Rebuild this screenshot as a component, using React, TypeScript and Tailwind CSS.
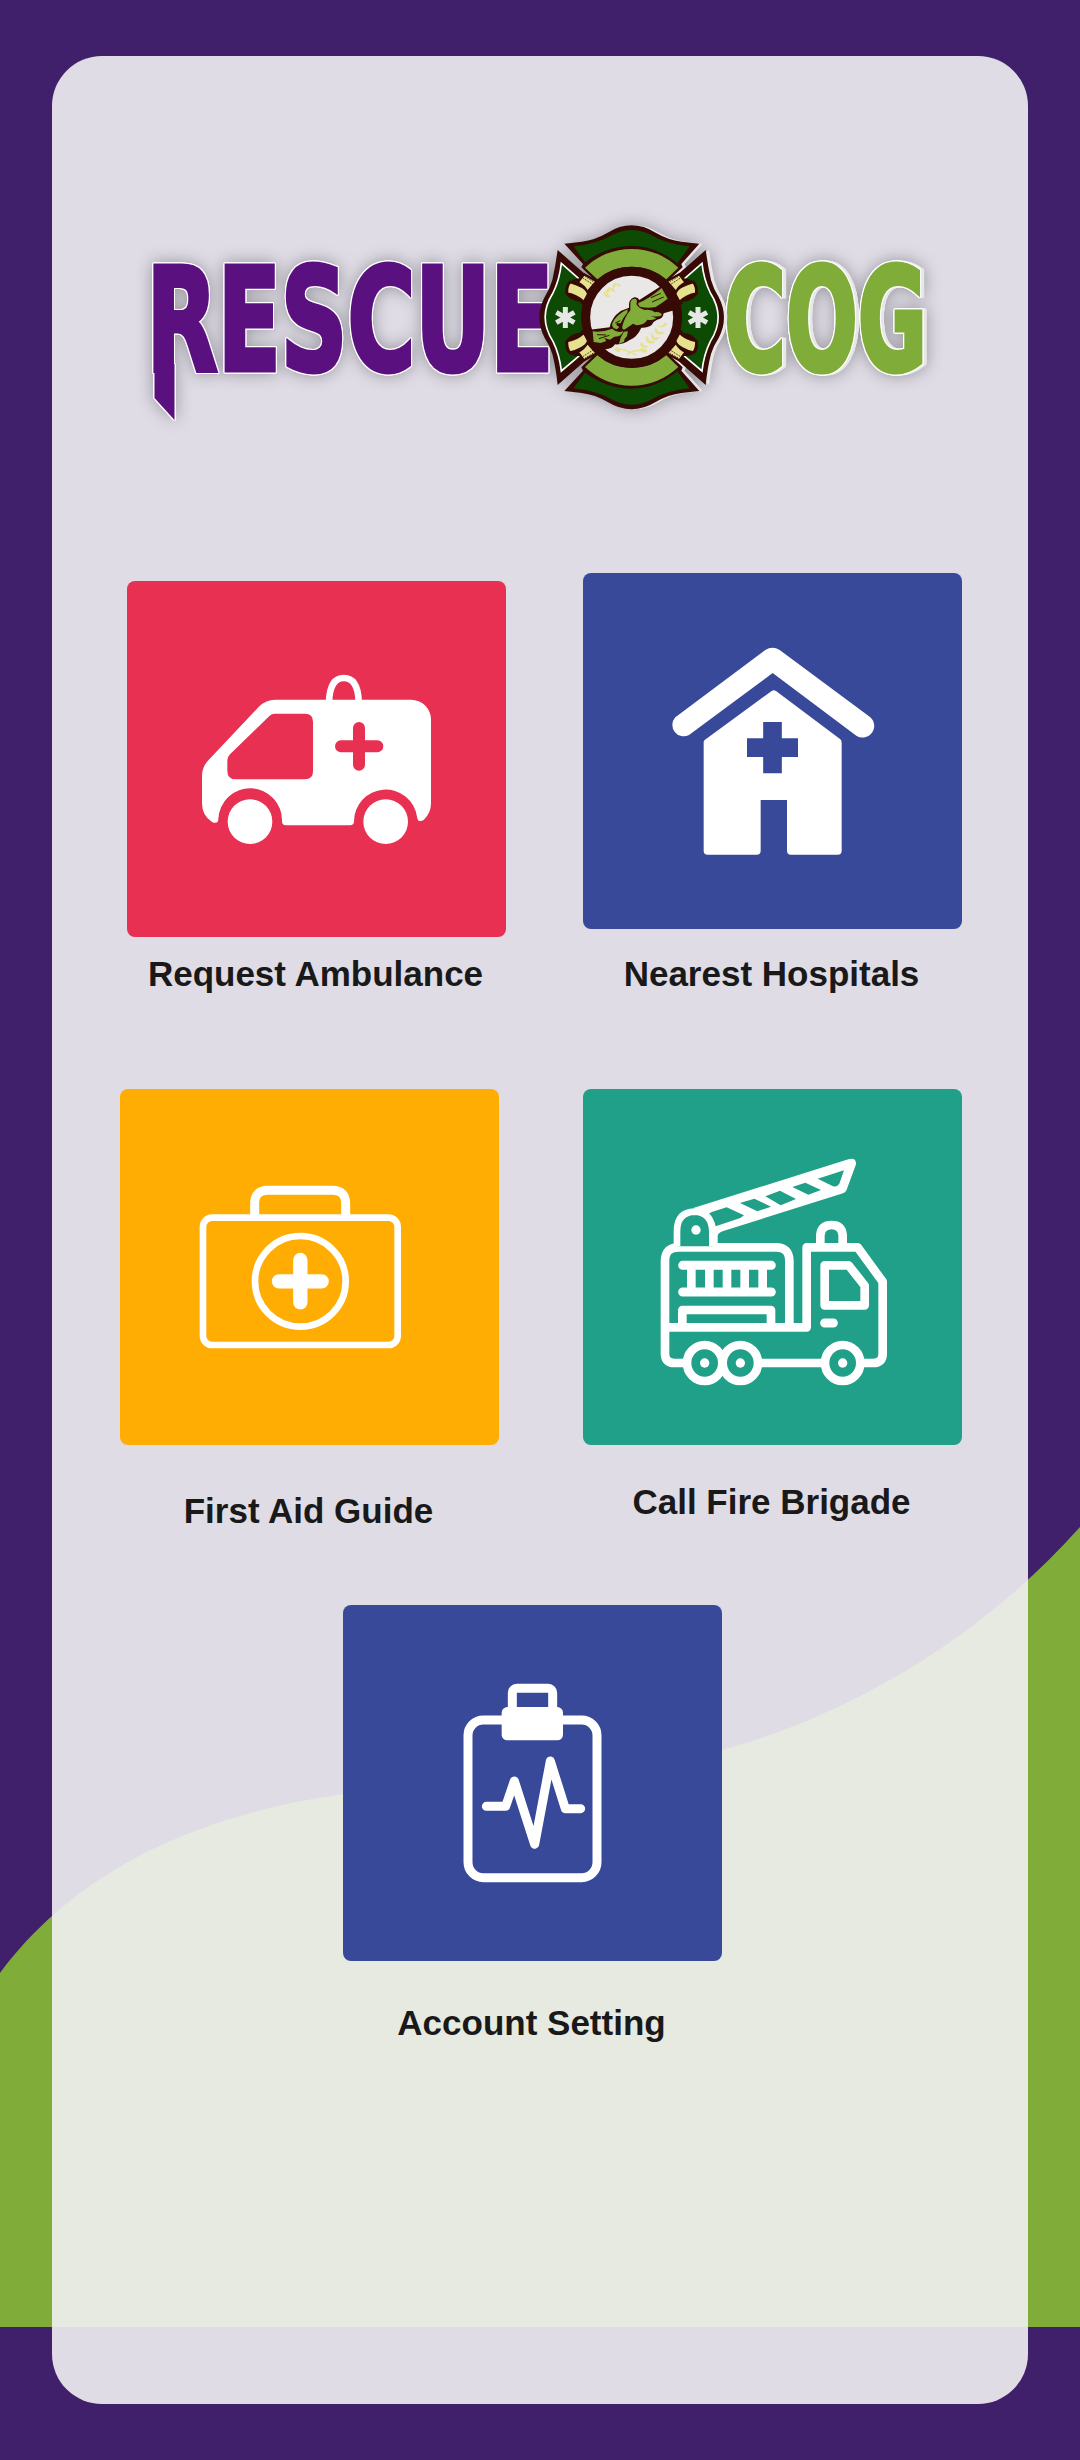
import type { ReactNode } from "react";

function Backdrop() {
  return (
    <svg className="absolute inset-0 h-full w-full" viewBox="0 0 1080 2460" aria-hidden="true">
      <path
        fill="#80ad3a"
        d="M0 1973C88 1855 225 1811 343 1794C470 1777 600 1783 722 1750C840 1718 975 1645 1080 1527V2327H0Z"
      />
    </svg>
  );
}

const topShield =
  "M133 131L185 125Q225 120 263 98Q335 54 407 98Q445 120 485 125L538 131L484 192L488 202L438 248H232L184 202L189 192Z";
const wing = "M113 150L215 240V465L113 555Q107 500 97 462Q89 436 74 414Q42 352 74 291Q89 268 97 240Q106 200 113 150Z";

function ShieldTop() {
  return (
    <g>
      <path fill="#380a06" d={topShield} />
      <path fill="#0d4a03" d="M161 139Q231 132 278 104Q335 76 392 104Q439 132 509 139L472 190Q408 138 335 138Q262 138 195 186Z" />
      <path fill="#80ad3a" d="M195 203Q255 147 335 147Q415 147 475 203L439 238Q395 200 335 200Q275 200 232 238Z" />
    </g>
  );
}

function Strap() {
  return (
    <g stroke="#380a06">
      <path strokeWidth="8" fill="#e6e18f" d="M150 246Q190 256 210 280L191 306Q171 287 141 281Q139 260 150 246Z" />
      <path strokeWidth="7" fill="#e6e18f" d="M192 223L230 244L202 276Q193 258 173 248Z" />
      <path strokeWidth="3" strokeDasharray="3 3" d="M196 230L222 246M190 235L218 253" />
    </g>
  );
}

function Wing() {
  return (
    <g>
      <path fill="#380a06" d={wing} />
      <path
        fill="#0d4a03"
        stroke="#fff"
        strokeWidth="5"
        d="M124 190L190 248V457L124 513Q119 465 99 424Q52 352 99 279Q119 238 124 190Z"
      />
      <path fill="#380a06" d="M180 235L215 262V443L180 468Q130 470 137 425Q150 400 182 398V306Q150 302 137 281Q130 240 180 235Z" />
      <path fill="#0d4a03" d="M120 285Q150 295 190 316V389Q150 405 120 415Z" />
      <Strap />
      <g transform="matrix(1 0 0 -1 0 704)">
        <Strap />
      </g>
      <path stroke="#e8e7e8" strokeWidth="15" d="M136 321V384M109 337L163 368M109 368L163 337" />
    </g>
  );
}

function Handshake() {
  return (
    <g transform="translate(165 186)">
      <g fill="#e6e18f">
        <path d="M84 89Q88 108 105 106Q104 94 84 89ZM91 88Q96 80 104 74Q108 88 94 98ZM104 76Q107 91 121 89Q119 79 104 76ZM112 71Q116 63 123 60Q124 74 115 80ZM122 64Q126 76 138 72Q136 63 122 64Z" />
        <path d="M249 188Q250 204 275 190Q278 181 268 183L258 194ZM241 195Q234 216 252 218Q268 216 268 209L251 209ZM229 209Q224 226 235 235Q250 236 254 225L238 226ZM214 221Q208 239 223 244Q238 249 240 238L225 236ZM198 239Q190 253 207 258Q218 262 218 252L207 250ZM195 257Q198 273 211 272Q221 270 215 263Z" />
        <path d="M118 262Q126 247 139 264Q128 278 118 262Z" />
      </g>
      <path fill="none" stroke="#e6e18f" strokeWidth="5" d="M137 261Q165 268 184 280M155 278Q174 263 199 266" />
      <path
        fill="#380a06"
        d="M44 203L104 196Q109 167 137 147L162 137Q160 111 178 106Q189 105 193 114L262 70L300 144L266 154Q264 171 246 173L236 180Q227 199 199 197Q186 226 163 235Q144 249 120 247Q111 264 83 261L66 242Z"
      />
      <g fill="#80ad3a">
        <path d="M190 123Q222 111 260 78L278 110Q258 125 242 135Q217 140 195 134Q188 130 190 123Z" />
        <path d="M166 124Q169 108 183 111Q188 116 184 126Q191 139 210 144Q229 141 240 151Q255 148 261 159Q250 167 226 161L244 169Q234 177 217 173Q209 188 185 190L174 185L150 202Q140 205 142 193Q149 165 166 145Z" />
        <path d="M53 208Q80 212 112 200Q126 215 145 207Q140 225 118 224L105 233L88 228L94 237L77 243L56 240Z" />
        <path d="M112 184Q123 158 158 142L157 152Q143 168 137 184L126 183Q120 190 133 194L126 202Q109 199 112 184Z" />
        <path d="M146 210L158 207Q159 223 149 230L147 239L132 246L137 227Z" />
      </g>
      <path fill="none" stroke="#380a06" strokeWidth="3" d="M228 107L257 94M231 120L266 105M66 218L93 219M72 230L103 220M121 183L136 176" />
    </g>
  );
}

function Emblem() {
  return (
    <g transform="translate(520 200) scale(.33333)">
      <g fill="#e8e7e8" transform="translate(10 0)">
        <path d={topShield} />
        <path transform="matrix(1 0 0 -1 0 704)" d={topShield} />
        <path transform="matrix(-1 0 0 1 670 0)" d={wing} />
      </g>
      <ShieldTop />
      <g transform="matrix(1 0 0 -1 0 704)">
        <ShieldTop />
      </g>
      <Wing />
      <g transform="matrix(-1 0 0 1 670 0)">
        <Wing />
      </g>
      <circle cx="335" cy="352" r="138" fill="#e9e8e7" stroke="#380a06" strokeWidth="27" />
      <Handshake />
    </g>
  );
}

function Word({ children, x, length, color }: { children: string; x: number; length: number; color: string }) {
  return (
    <text
      x={x / 0.62}
      y={370.5}
      textLength={length / 0.62}
      lengthAdjust="spacingAndGlyphs"
      transform="scale(.62 1)"
      fontSize={143}
      fontWeight={700}
      fontFamily='"DejaVu Sans", sans-serif'
      fill={color}
      stroke={color}
      strokeWidth={5}
      strokeLinejoin="miter"
    >
      {children}
    </text>
  );
}

function Logo() {
  return (
    <svg
      className="ml-[78px] block h-[240px] w-[820px] overflow-visible drop-shadow-[0_0_8px_rgba(0,0,0,0.32)]"
      viewBox="130 200 820 240"
    >
      <g className="[filter:drop-shadow(1px_0_0_#fff)_drop-shadow(-1px_0_0_#fff)_drop-shadow(0_1px_0_#fff)_drop-shadow(0_-1px_0_#fff)]">
        <path fill="#5a107f" d="M154.500 364H174.500V420L154.500 398Z" />
        <Word x={146.5} length={407} color="#5a107f">RESCUE</Word>
      </g>
      <g className="[filter:drop-shadow(1px_0_0_#fff)_drop-shadow(-1px_0_0_#fff)_drop-shadow(0_1px_0_#fff)_drop-shadow(0_-1px_0_#fff)_drop-shadow(3px_0_0_#e8e7e8)]">
        <Word x={724} length={203} color="#80ad3a">COG</Word>
      </g>
      <Emblem />
    </svg>
  );
}

type TileProps = {
  label: string;
  tile: string;
  caption: string;
  viewBox: string;
  children: ReactNode;
};

function Tile({ label, tile, caption, viewBox, children }: TileProps) {
  return (
    <button type="button" className={`flex w-[379px] shrink-0 flex-col items-center ${tile}`}>
      <svg className="block h-[356px] w-[379px] rounded-lg" viewBox={viewBox} fill="none" aria-hidden="true">
        {children}
      </svg>
      <span className={`h-10 -translate-x-px text-[35px] leading-10 font-bold whitespace-nowrap text-[#191919] ${caption}`}>{label}</span>
    </button>
  );
}

function Ambulance() {
  return (
    <>
      <rect x="21" y="31" width="1137" height="1068" fill="#e73052" />
      <path
        fill="#fff"
        d="M465 387H873A60 60 0 0 1 933 447V698Q933 728 911 748Q893 758 891 738A95 95 0 0 0 702 752Q702 764 690 764H498Q486 764 486 752A95 95 0 0 0 295 745Q294 762 276 754Q246 735 246 698V615Q246 590 263 571L418 407Q438 387 465 387Z"
      />
      <path fill="#e73052" d="M464 429H555Q579 429 579 453V602Q579 626 555 626H348Q322 626 322 600V568Q322 560 330 551L449 435Q455 429 464 429Z" />
      <path stroke="#e73052" strokeWidth="36" strokeLinecap="round" d="M717 472V582M663 527H772" />
      <path stroke="#fff" strokeWidth="20" d="M627 393Q630 322 671 322Q714 322 716 393" />
      <circle cx="390" cy="753" r="67" fill="#fff" />
      <circle cx="797" cy="753" r="67" fill="#fff" />
    </>
  );
}

function Hospital() {
  return (
    <>
      <rect x="39" y="39" width="1137" height="1068" fill="#384999" />
      <path
        fill="#fff"
        d="M586 270Q607 256 629 270L897 469A34 34 0 0 1 859 527L608 339L357 525A34 34 0 0 1 316 472Z"
      />
      <path
        fill="#fff"
        d="M605 393Q611 388 618 393L811 538Q815 542 815 548V872Q815 884 803 884H663Q651 884 651 872V720H572V872Q572 884 560 884H413Q401 884 401 872V546Q401 542 405 539Z"
      />
      <path stroke="#384999" strokeWidth="56" d="M607.500 486V640M531 563H684" />
    </>
  );
}

function FirstAid() {
  return (
    <>
      <rect x="30" y="28" width="1137" height="1068" fill="#ffad03" />
      <g stroke="#fff">
        <rect x="279" y="414" width="584" height="382" rx="27" strokeWidth="20" />
        <path strokeWidth="27" d="M434 410V372Q434 332 474 332H667Q707 332 707 372V410" />
        <circle cx="571" cy="605" r="136" strokeWidth="20" />
        <path strokeWidth="43" strokeLinecap="round" d="M571 541V668M507 605H635" />
      </g>
    </>
  );
}

function FireTruck() {
  return (
    <>
      <rect x="39" y="28" width="1137" height="1068" fill="#20a088" />
      <path
        fill="#fff"
        d="M370 385L835 239Q859 232 858 254L830 330Q827 338 819 341L460 454Q443 459 443 470V500H413V400Z"
      />
      <path
        fill="#20a088"
        d="M415 403L425 397L470 383L522 407L511 415L437 440Q431 416 415 403ZM510 370L553 357L603 381L562 395ZM586 350L630 333L678 358L632 377ZM667 322L706 309L753 331L715 345ZM743 297L822 272L808 312Q801 323 789 320Z"
      />
      <g stroke="#fff" strokeWidth="26" strokeLinejoin="round">
        <path d="M345 850H313Q285 850 285 822V544Q285 503 326 503H618Q658 503 658 544V742" />
        <path d="M290 743H710V503H863L938 606V822Q938 850 910 850H878M570 850H757" />
        <path fill="#20a088" strokeWidth="20" d="M321 500V454Q321 398 374 396Q425 398 427 454V500" />
        <path d="M751 497V466Q754 436 785 436Q815 436 818 466V497" />
        <path d="M764 557H836L884 618V677H764Z" />
        <path strokeWidth="27" strokeLinecap="round" d="M338 557H604M338 637H604M764 730H790" />
        <path d="M364 557V637M418 557V637M471 557V637M524 557V637M578 557V637" />
        <path d="M337 739V691H603V739" />
      </g>
      <g stroke="#fff" strokeWidth="26">
        <ellipse cx="404" cy="850" rx="53" ry="54" />
        <ellipse cx="511" cy="850" rx="53" ry="54" />
        <ellipse cx="818" cy="850" rx="53" ry="54" />
      </g>
      <g fill="#fff">
        <circle cx="404" cy="850" r="14" />
        <circle cx="511" cy="850" r="14" />
        <circle cx="818" cy="850" r="14" />
        <circle cx="378" cy="451" r="14" />
      </g>
    </>
  );
}

function Clipboard() {
  return (
    <>
      <rect x="39" y="46" width="1137" height="1068" fill="#384999" />
      <g stroke="#fff" strokeWidth="27">
        <rect x="414" y="391" width="387" height="473" rx="46" />
        <rect x="547" y="296" width="121" height="90" rx="13" />
        <path
          strokeLinecap="round"
          strokeLinejoin="round"
          d="M469 650H527L553 574L614 764L661 514L706 657H752"
        />
      </g>
      <rect x="515" y="352" width="184" height="100" rx="17" fill="#fff" />
    </>
  );
}

export default function App() {
  return (
    <div className="relative h-[2460px] w-[1080px] overflow-hidden bg-[#40206b] pt-14 font-['Liberation_Sans',sans-serif]">
      <Backdrop />
      <main className="relative ml-[52px] flex h-[2348px] w-[976px] flex-col rounded-[50px] bg-[#f1f1f4]/90 pt-36">
        <Logo />
        <div className="mt-[133px] flex h-[516px] items-start pl-[75px]">
          <Tile label="Request Ambulance" tile="mt-2" caption="mt-[17px]" viewBox="21 31 1137 1068">
            <Ambulance />
          </Tile>
          <Tile label="Nearest Hospitals" tile="ml-[77px]" caption="mt-[25px]" viewBox="39 39 1137 1068">
            <Hospital />
          </Tile>
        </div>
        <div className="flex h-[516px] items-start pl-[68px]">
          <Tile label="First Aid Guide" tile="" caption="mt-[46px]" viewBox="30 28 1137 1068">
            <FirstAid />
          </Tile>
          <Tile label="Call Fire Brigade" tile="ml-[84px]" caption="mt-[37px]" viewBox="39 28 1137 1068">
            <FireTruck />
          </Tile>
        </div>
        <div className="flex items-start pl-[291px]">
          <Tile label="Account Setting" tile="" caption="mt-[42px]" viewBox="39 46 1137 1068">
            <Clipboard />
          </Tile>
        </div>
      </main>
    </div>
  );
}
